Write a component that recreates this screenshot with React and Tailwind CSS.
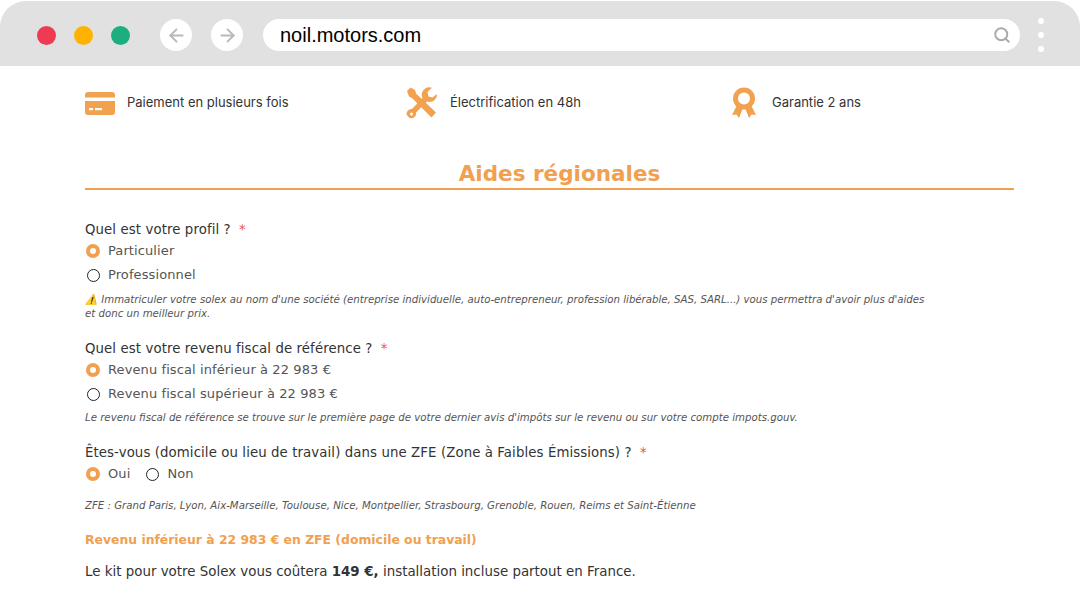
import React from 'react';
import { ArrowLeft, ArrowRight, Search } from 'lucide-react';

const mont = 'font-["DejaVu_Sans",sans-serif]';

const Radio = ({ checked }) => (
  checked
    ? <span className="w-[14px] h-[14px] rounded-full border-[4.5px] border-[#f0a04f] bg-white shrink-0" />
    : <span className="w-[13px] h-[13px] rounded-full border-[1.5px] border-[#222] bg-white shrink-0 mx-[0.5px]" />
);

const Option = ({ checked, label, className = '' }) => (
  <div className={`flex items-center gap-[8px] ${className}`}>
    <Radio checked={checked} />
    <span className="text-[13px] leading-[16px] text-[#555] tracking-[0.1px]">{label}</span>
  </div>
);

const Question = ({ children, className = '' }) => (
  <div className={`text-[13.300px] leading-[16px] text-[#333] tracking-[0.1px] ${className}`}>
    {children} <span className="text-[#e8574f] ml-1">*</span>
  </div>
);

const CardIcon = () => (
  <svg width="30" height="24" viewBox="0 0 30 24" fill="#f2a14f">
    <path d="M0 4a3 3 0 0 1 3-3h24a3 3 0 0 1 3 3v2.500H0z" />
    <path d="M0 10h30v11a3 3 0 0 1-3 3H3a3 3 0 0 1-3-3z" />
    <rect x="4" y="17" width="4" height="2.200" fill="#fff" />
    <rect x="10" y="17" width="7" height="2.200" fill="#fff" />
  </svg>
);

const ToolsIcon = () => (
  <svg width="32" height="32" viewBox="0 0 32 32" fill="#f2a14f">
    <path d="M1 4l3.500-3.500L9 3l1 3.500 20 19-4.500 5L6 11 3 9.500z" />
    <path d="M31 7a7.500 7.500 0 0 1-10 7.500L10 25.500a4.500 4.500 0 0 1-1.500 4.500 4.300 4.300 0 0 1-6.500-.5 4.300 4.300 0 0 1 0-6 4.500 4.500 0 0 1 4-1.500L16.500 11A7.500 7.500 0 0 1 26 .8L21.500 5l1 4.500 4 1z" />
    <circle cx="5.500" cy="27" r="1.500" fill="#fff" />
  </svg>
);

const AwardIcon = () => (
  <svg width="24" height="32" viewBox="0 0 24 32" fill="#f2a14f">
    <path d="M5 18L0 28l4.500-.5L7 31l4-10zM19 18l5 10-4.500-.5L17 31l-4-10z" />
    <circle cx="12" cy="11.500" r="11" />
    <circle cx="12" cy="11.500" r="6" fill="#fff" />
  </svg>
);

const App = () => {
  return (
    <div className={`w-[1080px] h-[600px] overflow-hidden bg-white ${mont}`}>
      {/* browser bar */}
      <div className="h-[65px] mt-px bg-[#e1e1e1] rounded-t-[26px] flex items-center pl-[37px] pr-[34px] pt-[3px]">
        <span className="w-[19px] h-[19px] rounded-full bg-[#ee3a52]" />
        <span className="w-[19px] h-[19px] rounded-full bg-[#ffb300] ml-[18px]" />
        <span className="w-[19px] h-[19px] rounded-full bg-[#1cae7f] ml-[18px]" />
        <span className="w-[32px] h-[32px] rounded-full bg-white ml-[30px] flex items-center justify-center">
          <ArrowLeft size={21} strokeWidth={2.2} className="text-[#b9b9b9]" />
        </span>
        <span className="w-[32px] h-[32px] rounded-full bg-white ml-[19px] flex items-center justify-center">
          <ArrowRight size={21} strokeWidth={2.2} className="text-[#b9b9b9]" />
        </span>
        <div className="w-[757px] h-[32px] rounded-full bg-white ml-[20px] flex items-center justify-between pl-[17px] pr-[9px]">
          <span className='font-["Liberation_Sans",sans-serif] text-[20px] text-black'>noil.motors.com</span>
          <Search size={18} strokeWidth={2.6} className="text-[#ababab]" />
        </div>
        <div className="ml-[18px] flex flex-col gap-[8px]">
          <span className="w-[6px] h-[6px] rounded-full bg-white" />
          <span className="w-[6px] h-[6px] rounded-full bg-white" />
          <span className="w-[6px] h-[6px] rounded-full bg-white" />
        </div>
      </div>

      <div className="pl-[85px] pr-[66px]">
        {/* perks */}
        <div className='flex items-center h-[72px] pt-[2px] font-["Inter",sans-serif] text-[13px] text-[#333]'>
          <div className="w-[321px] flex items-center gap-[12px]"><CardIcon /><span>Paiement en plusieurs fois</span></div>
          <div className="w-[326px] flex items-center gap-[12px]"><ToolsIcon /><span>Électrification en 48h</span></div>
          <div className="flex items-center gap-[16px]"><AwardIcon /><span>Garantie 2 ans</span></div>
        </div>

        {/* title */}
        <div className="border-b-2 border-[#f0a04f] text-center h-[52px] pt-[20px] pl-[20px] text-[21.500px] leading-[32px] font-bold text-[#f0a04f]">
          Aides régionales
        </div>

        <Question className="mt-[32px]">Quel est votre profil ?</Question>
        <Option checked label="Particulier" className="mt-[5px] pl-[1px]" />
        <Option label="Professionnel" className="mt-[8px] pl-[1px]" />
        <p className="mt-[10px] w-[845px] text-[10.200px] leading-[14px] italic text-[#555]">
          ⚠️ Immatriculer votre solex au nom d'une société (entreprise individuelle, auto-entrepreneur, profession libérable, SAS, SARL...) vous permettra d'avoir plus d'aides et donc un meilleur prix.
        </p>

        <Question className="mt-[20px]">Quel est votre revenu fiscal de référence ?</Question>
        <Option checked label="Revenu fiscal inférieur à 22 983 €" className="mt-[5px] pl-[1px]" />
        <Option label="Revenu fiscal supérieur à 22 983 €" className="mt-[8px] pl-[1px]" />
        <p className="mt-[9px] text-[10.200px] leading-[14px] italic text-[#555]">
          Le revenu fiscal de référence se trouve sur le première page de votre dernier avis d'impôts sur le revenu ou sur votre compte impots.gouv.
        </p>

        <Question className="mt-[20px]">Êtes-vous (domicile ou lieu de travail) dans une ZFE (Zone à Faibles Émissions) ?</Question>
        <div className="flex items-center mt-[5px] pl-[1px]">
          <Option checked label="Oui" />
          <Option label="Non" className="ml-[15px]" />
        </div>
        <p className="mt-[17px] text-[10.200px] leading-[14px] italic text-[#555]">
          ZFE : Grand Paris, Lyon, Aix-Marseille, Toulouse, Nice, Montpellier, Strasbourg, Grenoble, Rouen, Reims et Saint-Étienne
        </p>
        <div className="mt-[19px] text-[12.400px] leading-[16px] font-bold text-[#f0a04f]">
          Revenu inférieur à 22 983 € en ZFE (domicile ou travail)
        </div>
        <div className="mt-[16px] text-[13.400px] leading-[16px] text-[#333]">
          Le kit pour votre Solex vous coûtera <b>149 €,</b> installation incluse partout en France.
        </div>
      </div>
    </div>
  );
};

export default App;
